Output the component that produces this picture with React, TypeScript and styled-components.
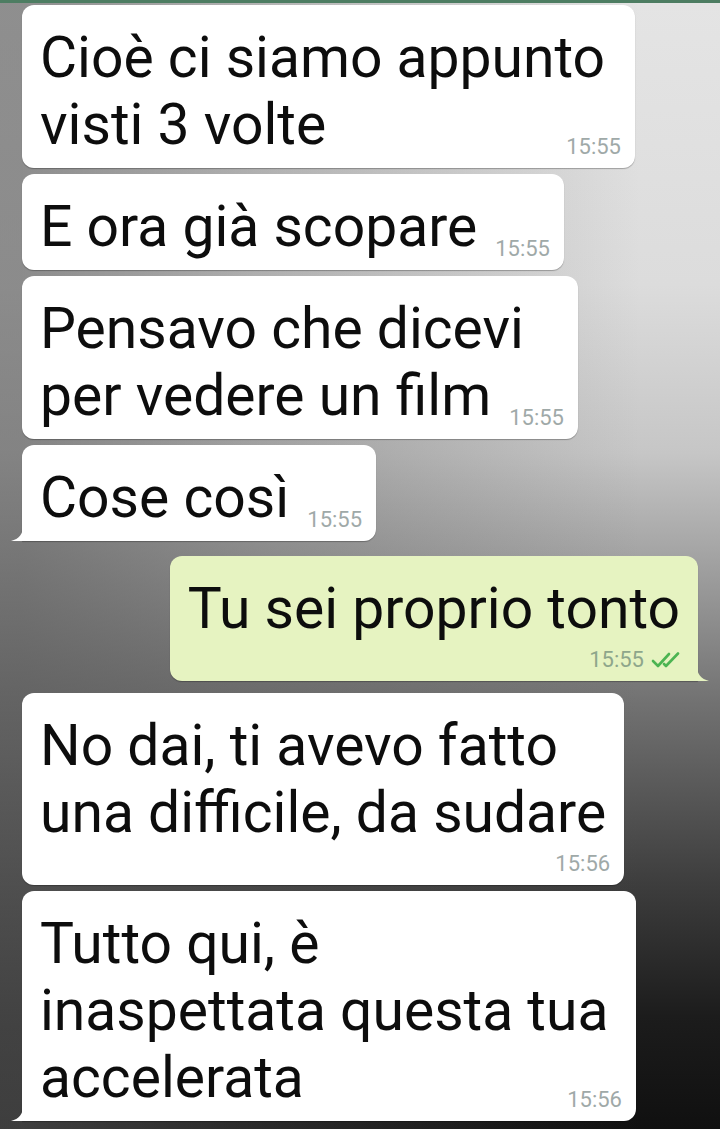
import React from "react";
import styled, { createGlobalStyle, css } from "styled-components";

const GlobalStyle = createGlobalStyle`
  html, body {
    margin: 0;
    padding: 0;
  }
  body {
    font-family: Roboto, "Noto Sans", sans-serif;
  }
`;

const Screen = styled.div`
  min-height: 100vh;
  box-sizing: border-box;
  border-top: 3px solid #4d7d62;
  padding: 2px 22px 8px;
  display: flex;
  flex-direction: column;
  background:
    linear-gradient(
      to right,
      rgba(90, 90, 90, 0.62) 0px,
      rgba(90, 90, 90, 0.62) 22px,
      rgba(90, 90, 90, 0.35) 260px,
      rgba(90, 90, 90, 0) 640px
    ),
    linear-gradient(
      to bottom,
      #e4e4e4 0%,
      #dcdcdc 25%,
      #c6c6c6 40%,
      #a0a0a0 50%,
      #727272 62%,
      #3e3e3e 78%,
      #1c1c1c 90%,
      #101010 100%
    );
`;

const Row = styled.div<{ $out?: boolean; $gap: number }>`
  display: flex;
  justify-content: ${(p) => (p.$out ? "flex-end" : "flex-start")};
  margin-top: ${(p) => p.$gap}px;
`;

const Bubble = styled.div<{ $out?: boolean; $tail?: boolean; $width?: number }>`
  position: relative;
  box-sizing: border-box;
  width: ${(p) => (p.$width ? `${p.$width}px` : "auto")};
  padding: 19px 18px 10px 18px;
  border-radius: 12px;
  background: ${(p) => (p.$out ? "#e6f3c1" : "#ffffff")};
  box-shadow: 0 1px 1px rgba(0, 0, 0, 0.28);
  color: #0d0d0d;
  font-size: 57px;
  line-height: 67px;
  font-family: Roboto, sans-serif;
  white-space: nowrap;

  ${(p) =>
    p.$tail &&
    (p.$out
      ? css`
          border-bottom-right-radius: 0;
        `
      : css`
          border-bottom-left-radius: 0;
        `)}
`;

const Tail = styled.svg<{ $out?: boolean }>`
  position: absolute;
  bottom: 0;
  width: 12px;
  height: 15px;
  ${(p) =>
    p.$out
      ? css`
          right: -11px;
          transform: scaleX(-1);
        `
      : css`
          left: -11px;
        `}
`;

const Line = styled.div``;

const LastLine = styled.div`
  display: flex;
  align-items: flex-end;
`;

const Time = styled.span<{ $out?: boolean; $below?: boolean }>`
  display: inline-flex;
  align-items: center;
  gap: 6px;
  margin-left: auto;
  padding-left: 18px;
  margin-right: -4px;
  font-size: 22px;
  line-height: 22px;
  color: ${(p) => (p.$out ? "#8ea68b" : "#9fa9a8")};
  ${(p) =>
    p.$below &&
    css`
      margin-top: 7px;
    `}
`;

const TimeRow = styled.div`
  display: flex;
  justify-content: flex-end;
`;

const Ticks = () => (
  <svg width="34" height="16" viewBox="0 0 34 16" fill="none">
    <path
      d="M3 9 L8 14 L19 2"
      stroke="#4cb452"
      strokeWidth="2.6"
      strokeLinecap="round"
      strokeLinejoin="round"
    />
    <path
      d="M14 12 L16 14 L28 1.5"
      stroke="#4cb452"
      strokeWidth="2.6"
      strokeLinecap="round"
      strokeLinejoin="round"
    />
  </svg>
);

type Msg = {
  lines: string[];
  time: string;
  out?: boolean;
  tail?: boolean;
  below?: boolean;
  width?: number;
  gap: number;
};

const messages: Msg[] = [
  { lines: ["Cioè ci siamo appunto", "visti 3 volte"], time: "15:55", width: 613, gap: 0 },
  { lines: ["E ora già scopare"], time: "15:55", gap: 6 },
  { lines: ["Pensavo che dicevi", "per vedere un film"], time: "15:55", gap: 6 },
  { lines: ["Cose così"], time: "15:55", tail: true, gap: 6 },
  { lines: ["Tu sei proprio tonto"], time: "15:55", out: true, tail: true, below: true, gap: 15 },
  { lines: ["No dai, ti avevo fatto", "una difficile, da sudare"], time: "15:56", below: true, gap: 12 },
  {
    lines: ["Tutto qui, è", "inaspettata questa tua", "accelerata"],
    time: "15:56",
    tail: true,
    width: 614,
    gap: 6,
  },
];

function Message({ m }: { m: Msg }) {
  const time = (
    <Time $out={m.out} $below={m.below}>
      {m.time}
      {m.out && <Ticks />}
    </Time>
  );
  const head = m.below ? m.lines : m.lines.slice(0, -1);
  const last = m.lines[m.lines.length - 1];
  return (
    <Row $out={m.out} $gap={m.gap}>
      <Bubble $out={m.out} $tail={m.tail} $width={m.width}>
        {head.map((l) => (
          <Line key={l}>{l}</Line>
        ))}
        {m.below ? (
          <TimeRow>{time}</TimeRow>
        ) : (
          <LastLine>
            <span>{last}</span>
            {time}
          </LastLine>
        )}
        {m.tail && (
          <Tail $out={m.out} viewBox="0 0 12 15">
            <path
              d="M12 0 C12 8 8 13 0 15 L12 15 Z"
              fill={m.out ? "#e6f3c1" : "#ffffff"}
            />
          </Tail>
        )}
      </Bubble>
    </Row>
  );
}

export default function App() {
  return (
    <>
      <GlobalStyle />
      <Screen>
        {messages.map((m, i) => (
          <Message key={i} m={m} />
        ))}
      </Screen>
    </>
  );
}
